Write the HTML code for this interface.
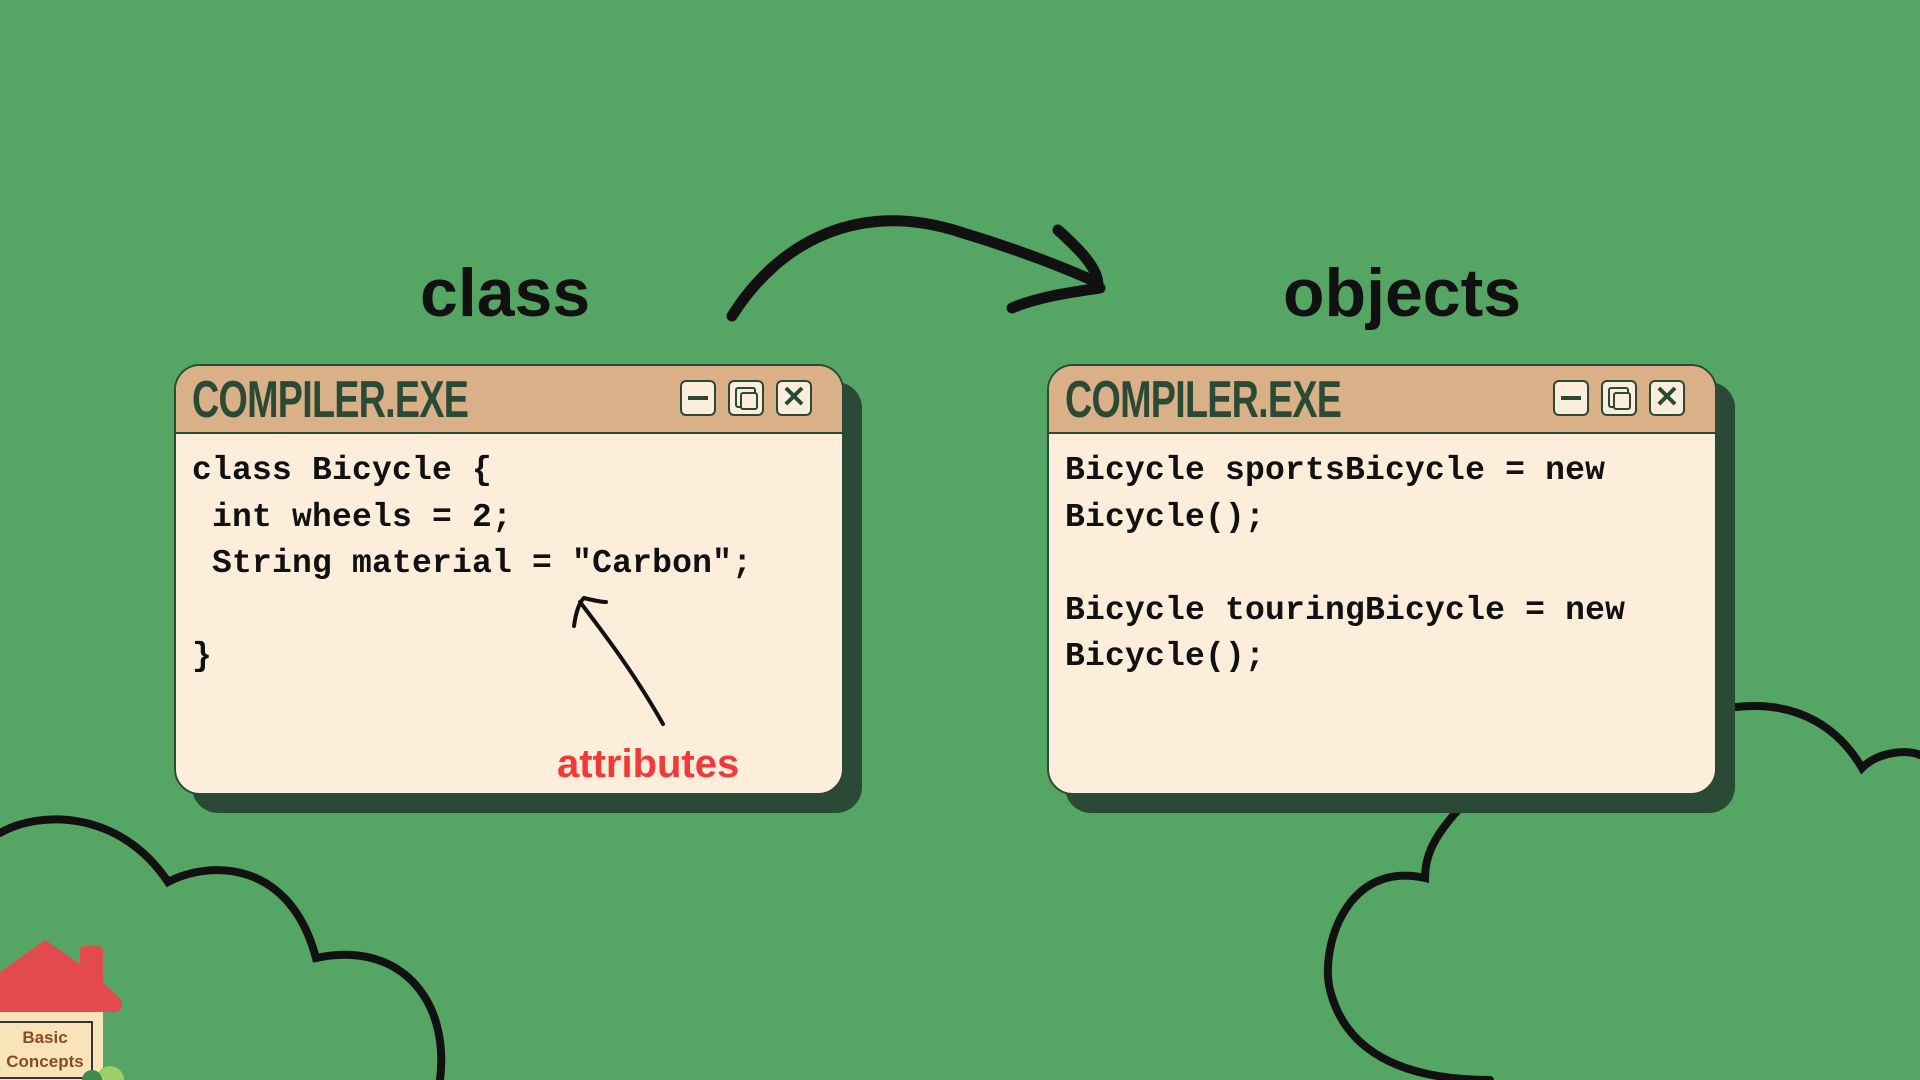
<!DOCTYPE html>
<html><head><style>
body{margin:0;width:1920px;height:1080px;background:#55a664;position:relative;overflow:hidden;font-family:"Liberation Sans",sans-serif}
.h{position:absolute;font-weight:bold;font-size:68px;color:#111;letter-spacing:0px}
.win{position:absolute;top:364px;width:670px;height:431px;}
.sh{position:absolute;left:18px;top:18px;right:-18px;bottom:-18px;background:#2a4a35;border-radius:26px}
.bd{position:absolute;inset:0;background:#fdeddb;border:2px solid #2a4a35;border-radius:26px;overflow:hidden}
.tb{height:66px;background:#d9b087;border-bottom:2px solid #2a4a35;position:relative}
.tt{position:absolute;left:16px;top:4px;font-size:52px;font-weight:bold;color:#2a4a35;transform:scaleX(.725);transform-origin:left;letter-spacing:-1px}
.btn{position:absolute;top:14px;width:36px;height:36px;border:2px solid #2a4a35;border-radius:6px;background:#fdeddb;box-sizing:border-box}
.code{position:absolute;left:16px;top:82px;font-family:"Liberation Mono",monospace;font-weight:bold;font-size:33px;line-height:46.5px;color:#111;white-space:pre;letter-spacing:0.2px}
</style></head><body>
<svg width="1920" height="1080" style="position:absolute;left:0;top:0" fill="none" stroke="#111" stroke-linecap="round">
<path d="M0 833 C40 810 120 810 168 882 C210 860 290 860 316 958 C400 940 450 1000 440 1080" stroke-width="8"/>
<path d="M1736 707 C1800 700 1840 730 1862 768 C1880 750 1910 750 1920 755" stroke-width="8"/>
<path d="M1460 808 C1430 840 1425 860 1425 878 C1345 860 1320 950 1330 990 C1345 1050 1400 1080 1490 1080" stroke-width="8"/>
<path d="M732 316 C780 240 860 200 960 232 C1020 250 1070 270 1096 282" stroke-width="11"/>
<path d="M1012 308 C1040 296 1075 292 1100 288 M1058 230 C1080 250 1098 268 1098 285" stroke-width="11"/>
</svg>
<div class="h" style="left:420px;top:254px">class</div>
<div class="h" style="left:1283px;top:254px">objects</div>
<div class="win" style="left:174px"><div class="sh"></div><div class="bd">
<div class="tb"><div class="tt">COMPILER.EXE</div>
<div class="btn" style="left:504px"><div style="position:absolute;left:6px;top:14px;width:20px;height:4px;background:#2a4a35"></div></div>
<div class="btn" style="left:552px"><div style="position:absolute;left:5px;top:5px;width:17px;height:17px;border:2px solid #2a4a35;border-radius:3px"></div><div style="position:absolute;left:10px;top:10px;width:14px;height:14px;border:2px solid #2a4a35;border-radius:3px;background:#fdeddb"></div></div>
<div class="btn" style="left:600px;text-align:center;font-size:30px;line-height:32px;color:#2a4a35;font-weight:bold">✕</div>
</div>
<div class="code">class Bicycle {
 int wheels = 2;
 String material = "Carbon";

}</div>
<div style="position:absolute;left:381px;top:376px;font-size:40px;font-weight:bold;color:#f03a3a">attributes</div>
<svg width="670" height="431" style="position:absolute;left:0;top:0" fill="none" stroke="#111" stroke-width="4" stroke-linecap="round"><path d="M487 358 C460 310 430 270 404 236 M398 260 C400 245 404 235 408 232 C416 234 424 236 430 236"/></svg>
</div></div>
<div class="win" style="left:1047px"><div class="sh"></div><div class="bd">
<div class="tb"><div class="tt">COMPILER.EXE</div>
<div class="btn" style="left:504px"><div style="position:absolute;left:6px;top:14px;width:20px;height:4px;background:#2a4a35"></div></div>
<div class="btn" style="left:552px"><div style="position:absolute;left:5px;top:5px;width:17px;height:17px;border:2px solid #2a4a35;border-radius:3px"></div><div style="position:absolute;left:10px;top:10px;width:14px;height:14px;border:2px solid #2a4a35;border-radius:3px;background:#fdeddb"></div></div>
<div class="btn" style="left:600px;text-align:center;font-size:30px;line-height:32px;color:#2a4a35;font-weight:bold">✕</div>
</div>
<div class="code">Bicycle sportsBicycle = new
Bicycle();

Bicycle touringBicycle = new
Bicycle();</div>
</div></div>
<svg width="200" height="180" style="position:absolute;left:0;top:900px">
<rect x="0" y="110" width="103" height="70" fill="#f9e3b9"/>
<rect x="-2" y="122" width="94" height="56" fill="none" stroke="#333" stroke-width="2"/>
<path d="M0 72 L45 40 L80 64 L80 50 Q80 46 86 46 L97 46 Q103 46 103 52 L103 83 L120 98 Q126 110 115 112 L0 112 Z" fill="#e24a50"/>
<text x="45" y="143" font-family="Liberation Sans" font-weight="bold" font-size="17" fill="#8b4a22" text-anchor="middle">Basic</text>
<text x="45" y="167" font-family="Liberation Sans" font-weight="bold" font-size="17" fill="#8b4a22" text-anchor="middle">Concepts</text>
<circle cx="110" cy="180" r="14" fill="#9bd068"/><circle cx="92" cy="180" r="10" fill="#3e8a4e"/>
</svg>
</body></html>
